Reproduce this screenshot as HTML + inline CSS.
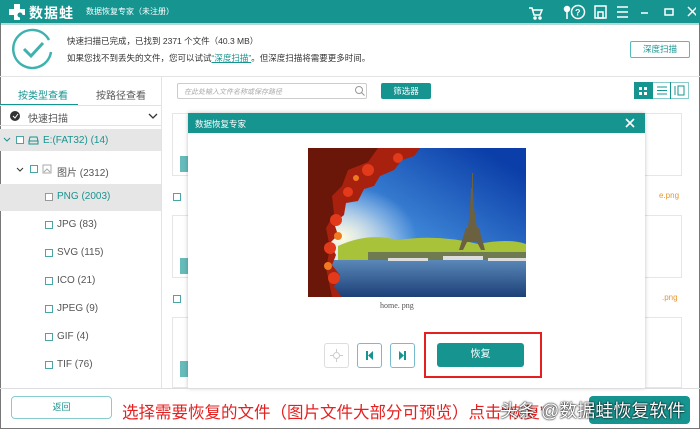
<!DOCTYPE html><html><head><meta charset="utf-8"><style>
*{margin:0;padding:0;box-sizing:border-box}
body{width:700px;height:429px;overflow:hidden;background:#fff;font-family:"Liberation Sans","Noto Sans CJK SC",sans-serif;position:relative;color:#333}
.a{position:absolute}
.t{font-size:9px}
.cb{position:absolute;width:8px;height:8px;border:1px solid #4aa6a6;background:#fff}
.tree{font-size:10px;color:#555}
</style></head><body>
<div class="a" style="left:0;top:0;width:700px;height:429px;border:1px solid #777;border-top:none"></div>
<!-- title bar -->
<div class="a" style="left:0;top:0;width:700px;height:23px;background:#169490"></div>
<svg class="a" style="left:8px;top:3px" width="18" height="18"><path d="M6 1h6v5h5v6h-5v5H6v-5H1V6h5z" fill="#fff"/><circle cx="12" cy="12" r="2.5" fill="#169490"/></svg>
<div class="a" style="left:29px;top:3px;color:#fff;font-size:14px;font-weight:bold;letter-spacing:1px">数据蛙</div>
<div class="a t" style="left:86px;top:6px;color:#fff;font-size:8px">数据恢复专家（未注册）</div>
<svg class="a" style="left:526px;top:4px" width="170" height="16" fill="none" stroke="#fff" stroke-width="1.5">
<path d="M3 4h3l2 7h6l2-5H7" /><circle cx="9" cy="14" r="1" fill="#fff"/><circle cx="14" cy="14" r="1" fill="#fff"/>
<circle cx="41" cy="5" r="2.5" fill="#fff"/><path d="M41 7v8"/>
<circle cx="52" cy="8" r="6.5"/><text x="49" y="11.5" fill="#fff" stroke="none" font-size="9" font-family="Liberation Sans" font-weight="bold">?</text>
<rect x="69" y="2" width="11" height="12"/><rect x="72" y="8" width="5" height="6"/>
<path d="M91 3h11M91 8h11M91 13h11"/><path d="M115 9h7"/><rect x="139" y="5" width="8" height="6"/><path d="M162 3l9 9M171 3l-9 9"/></svg>
<div class="a" style="left:0;top:23px;width:700px;height:2px;background:#0e7a77;opacity:.3"></div>
<!-- header -->
<svg class="a" style="left:12px;top:28px" width="42" height="42" fill="none" stroke="#3fb2b0" stroke-width="2.5"><path d="M37 12A19 19 0 1 0 39 24"/><path d="M12 21l7 7 12-13" stroke-width="3"/></svg>
<div class="a t" style="left:67px;top:35px;font-size:8.5px">快速扫描已完成，已找到 2371 个文件（40.3 MB）</div>
<div class="a t" style="left:67px;top:52px;font-size:8.5px">如果您找不到丢失的文件，您可以试试<span style="color:#169490;text-decoration:underline">“深度扫描”</span>。但深度扫描将需要更多时间。</div>
<div class="a" style="left:630px;top:41px;width:60px;height:17px;border:1px solid #5bb;border-radius:2px;color:#169490;font-size:8.5px;text-align:center;line-height:15px">深度扫描</div>
<div class="a" style="left:0;top:76px;width:700px;height:1px;background:#e3e3e3"></div>
<!-- tabs -->
<div class="a" style="left:161px;top:77px;width:1px;height:311px;background:#e3e3e3"></div>
<div class="a" style="left:18px;top:87px;font-size:10px;color:#169490">按类型查看</div>
<div class="a" style="left:96px;top:87px;font-size:10px;color:#555">按路径查看</div>
<div class="a" style="left:0;top:104px;width:78px;height:2px;background:#169490"></div>
<div class="a" style="left:0;top:105px;width:161px;height:1px;background:#e3e3e3"></div>
<div class="a" style="left:177px;top:83px;width:190px;height:16px;border:1px solid #ccc;border-radius:2px;font-size:7px;color:#aaa;padding:3px 6px;font-style:italic">在此处输入文件名称或保存路径</div>
<svg class="a" style="left:354px;top:85px" width="11" height="11" fill="none" stroke="#999"><circle cx="5" cy="5" r="3.5"/><path d="M7.5 7.5l3 3"/></svg>
<div class="a" style="left:381px;top:83px;width:50px;height:16px;background:#169490;border-radius:2px;color:#fff;font-size:8.5px;text-align:center;line-height:16px">筛选器</div>
<div class="a" style="left:634px;top:82px;width:55px;height:17px;border:1px solid #8cc"></div>
<div class="a" style="left:634px;top:82px;width:18px;height:17px;background:#169490"></div>
<svg class="a" style="left:634px;top:82px" width="55" height="17" stroke-width="1"><g fill="#fff"><rect x="5" y="5" width="3" height="3"/><rect x="10" y="5" width="3" height="3"/><rect x="5" y="10" width="3" height="3"/><rect x="10" y="10" width="3" height="3"/></g><path d="M18.5 0v17M36.5 0v17M23 5h10M23 8.5h10M23 12h10M41 4v9M44 4h6v9h-6z" stroke="#169490" fill="none"/></svg>
<div class="a" style="left:0;top:125px;width:161px;height:1px;background:#e3e3e3"></div>
<!-- left tree -->
<div class="a" style="left:10px;top:111px;width:10px;height:10px;border-radius:50%;background:#333"></div>
<svg class="a" style="left:10px;top:111px" width="10" height="10"><path d="M3 5l2 2 3-4" stroke="#fff" fill="none"/></svg>
<div class="a tree" style="left:28px;top:110px">快速扫描</div>
<svg class="a" style="left:148px;top:113px" width="10" height="7"><path d="M1 1l4 4 4-4" stroke="#333" fill="none" stroke-width="1.3"/></svg>
<div class="a" style="left:0;top:129px;width:161px;height:22px;background:#e6e6e6"></div>
<svg class="a" style="left:3px;top:137px" width="8" height="6"><path d="M1 1l3 3 3-3" stroke="#169490" fill="none"/></svg>
<div class="cb" style="left:16px;top:136px"></div>
<svg class="a" style="left:28px;top:135px" width="11" height="10" fill="none" stroke="#169490"><path d="M2 2h7l1 4H1zM1 6h9v3H1z"/></svg>
<div class="a tree" style="left:43px;top:135px;color:#169490">E:(FAT32) (14)</div>
<svg class="a" style="left:16px;top:167px" width="8" height="6"><path d="M1 1l3 3 3-3" stroke="#333" fill="none"/></svg>
<div class="cb" style="left:30px;top:165px"></div>
<svg class="a" style="left:42px;top:164px" width="10" height="10" fill="none" stroke="#aaa"><rect x="1" y="1" width="8" height="8"/><path d="M2 8l3-3 3 3"/></svg>
<div class="a tree" style="left:57px;top:164px">图片 (2312)</div>
<div class="a" style="left:0;top:184px;width:161px;height:27px;background:#e6e6e6"></div>
<div class="cb" style="left:45px;top:193px;border-color:#999"></div>
<div class="a tree" style="left:57px;top:191px;color:#169490">PNG (2003)</div>
<div class="cb" style="left:45px;top:221px"></div><div class="a tree" style="left:57px;top:219px">JPG (83)</div>
<div class="cb" style="left:45px;top:249px"></div><div class="a tree" style="left:57px;top:247px">SVG (115)</div>
<div class="cb" style="left:45px;top:277px"></div><div class="a tree" style="left:57px;top:275px">ICO (21)</div>
<div class="cb" style="left:45px;top:305px"></div><div class="a tree" style="left:57px;top:303px">JPEG (9)</div>
<div class="cb" style="left:45px;top:333px"></div><div class="a tree" style="left:57px;top:331px">GIF (4)</div>
<div class="cb" style="left:45px;top:361px"></div><div class="a tree" style="left:57px;top:359px">TIF (76)</div>
<!-- background cards -->
<div class="a" style="left:172px;top:113px;width:510px;height:63px;border:1px solid #e6e6e6"></div>
<div class="a" style="left:172px;top:215px;width:510px;height:63px;border:1px solid #e6e6e6"></div>
<div class="a" style="left:172px;top:317px;width:510px;height:71px;border:1px solid #e6e6e6"></div>
<div class="a" style="left:180px;top:156px;width:8px;height:16px;background:#6bb;"></div>
<div class="a" style="left:180px;top:258px;width:8px;height:16px;background:#6bb;"></div>
<div class="a" style="left:180px;top:361px;width:8px;height:16px;background:#6bb;"></div>
<div class="cb" style="left:173px;top:193px"></div><div class="cb" style="left:173px;top:295px"></div>
<div class="a" style="left:659px;top:191px;font-size:8px;color:#e8962e">e.png</div>
<div class="a" style="left:662px;top:293px;font-size:8px;color:#e8962e">.png</div>
<!-- modal -->
<div class="a" style="left:188px;top:113px;width:457px;height:275px;background:#fff;box-shadow:0 0 4px rgba(0,0,0,.25)"></div>
<div class="a" style="left:188px;top:113px;width:457px;height:20px;background:#169490;color:#fff;font-size:8.5px;padding:5px 7px">数据恢复专家</div>
<svg class="a" style="left:624px;top:117px" width="12" height="12"><path d="M2 2l8 8M10 2l-8 8" stroke="#fff" stroke-width="1.6"/></svg>
<svg class="a" style="left:308px;top:148px" width="218" height="149">
<defs><linearGradient id="s" x1="0.8" y1="0" x2="0" y2="0.9"><stop offset="0" stop-color="#0b3ea8"/><stop offset=".55" stop-color="#3f88d8"/><stop offset="1" stop-color="#e8f2f8"/></linearGradient>
<radialGradient id="sun" cx="0.15" cy="0.6" r="0.35"><stop offset="0" stop-color="#fffbe0"/><stop offset="1" stop-color="#fff" stop-opacity="0"/></radialGradient>
<linearGradient id="w" x1="0" y1="0" x2="0" y2="1"><stop offset="0" stop-color="#5a88b8"/><stop offset="1" stop-color="#1c3f78"/></linearGradient></defs>
<rect width="218" height="149" fill="url(#s)"/><rect width="218" height="149" fill="url(#sun)"/>
<path d="M30 98Q60 84 90 92Q130 86 170 96Q200 90 218 96V112H30z" fill="#a8c23a"/>
<path d="M60 104h158v8H60z" fill="#6f7a50"/>
<rect x="0" y="112" width="218" height="37" fill="url(#w)"/>
<path d="M80 110h40v3H80zM135 108h40v4h-40zM180 110h38v3h-38z" fill="#ddd"/>
<path d="M162 60l4 0 3 20 2 0 6 22h-4l-4-8h-10l-4 8h-4l7-22 2 0z" fill="#6b6040"/><path d="M163 40h2l1 20h-4z M164 25h1v15h-1z" fill="#6b6040"/>
<path d="M0 0h112l-6 8-12 4-8 10-14 6-6 10-10 3-6 12-12 2-2 12-10 8 4 12-8 8 6 12-4 10 8 10-6 12 8 10 -4 12H0z" fill="#a8200e"/>
<path d="M0 0h70l-10 14-20 8-6 16-10 10 2 18-8 14 4 20-4 20 6 29H0z" fill="#6a1608"/>
<g fill="#e23a1a"><circle cx="60" cy="22" r="6"/><circle cx="40" cy="44" r="5"/><circle cx="28" cy="72" r="6"/><circle cx="22" cy="100" r="6"/><circle cx="26" cy="130" r="6"/><circle cx="90" cy="10" r="5"/></g>
<g fill="#f07a20"><circle cx="30" cy="88" r="4"/><circle cx="48" cy="30" r="3"/><circle cx="20" cy="118" r="4"/></g>
</svg>
<div class="a" style="left:380px;top:301px;font-family:'Liberation Serif',serif;font-size:8px;color:#555">home. png</div>
<div class="a" style="left:324px;top:343px;width:25px;height:25px;border:1px solid #ddd;border-radius:3px"></div>
<svg class="a" style="left:330px;top:349px" width="13" height="13" fill="none" stroke="#ccc"><circle cx="6.5" cy="6.5" r="3"/><path d="M6.5 0v3M6.5 10v3M0 6.5h3M10 6.5h3"/></svg>
<div class="a" style="left:357px;top:343px;width:25px;height:25px;border:1px solid #7bc;border-radius:3px"></div>
<svg class="a" style="left:357px;top:343px" width="25" height="25" fill="#169490"><rect x="9" y="8" width="2" height="9"/><path d="M16 8v9l-5-4.5z"/></svg>
<div class="a" style="left:390px;top:343px;width:25px;height:25px;border:1px solid #7bc;border-radius:3px"></div>
<svg class="a" style="left:390px;top:343px" width="25" height="25" fill="#169490"><rect x="14" y="8" width="2" height="9"/><path d="M9 8v9l5-4.5z"/></svg>
<div class="a" style="left:437px;top:343px;width:87px;height:24px;background:#169490;border-radius:3px;color:#fff;font-size:10px;text-align:center;line-height:24px">恢复</div>
<div class="a" style="left:424px;top:332px;width:118px;height:46px;border:2px solid #e52020"></div>
<!-- bottom -->
<div class="a" style="left:0;top:388px;width:700px;height:1px;background:#ddd"></div>
<div class="a" style="left:11px;top:396px;width:101px;height:23px;border:1px solid #8cc;border-radius:4px;color:#169490;font-size:9px;text-align:center;line-height:21px">返回</div>
<div class="a" style="left:589px;top:396px;width:101px;height:28px;background:#169490;border-radius:4px"></div>
<div class="a" style="left:122px;top:399px;font-size:16.5px;color:#e52020;white-space:nowrap">选择需要恢复的文件（图片文件大部分可预览）点击“恢复”</div>
<div class="a" style="left:500px;top:397px;font-size:18px;color:#fff;white-space:nowrap;text-shadow:0 0 2px #000,0 0 1px #000">头条 @数据蛙恢复软件</div>
</body></html>
